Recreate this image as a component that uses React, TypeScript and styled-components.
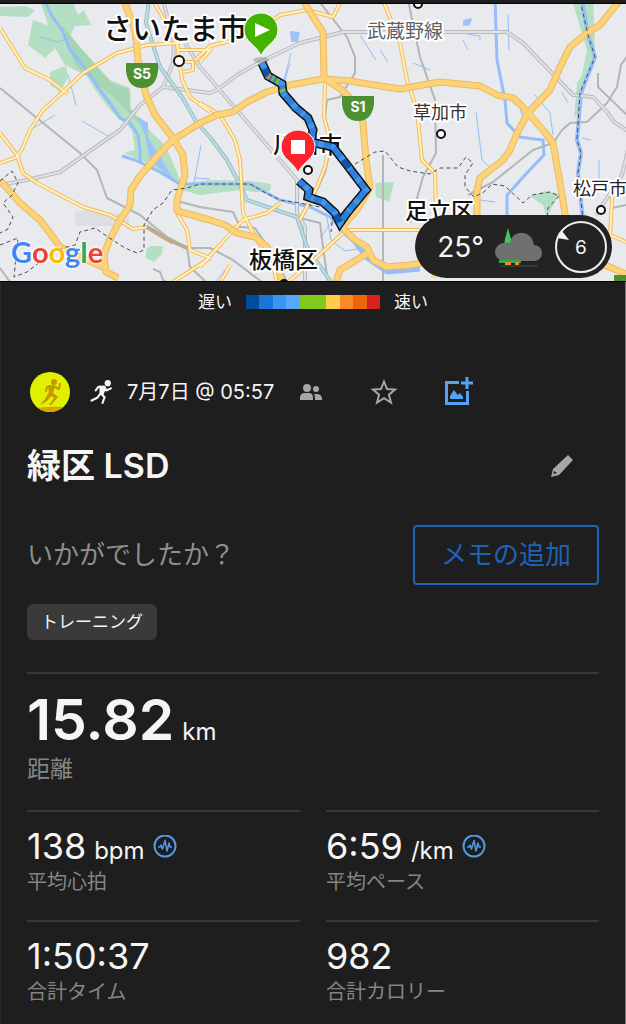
import React from "react";
import styled, { createGlobalStyle } from "styled-components";

const GlobalStyle = createGlobalStyle`
  *, *::before, *::after { box-sizing: border-box; }
  body {
    margin: 0;
    background: #1e1e1e;
    color: #f5f5f5;
    font-family: Inter, "Noto Sans CJK JP", sans-serif;
  }
  h1, h2, p, dl, dt, dd { margin: 0; }
  button { font-family: inherit; cursor: pointer; }
`;

const Page = styled.main`
  border-top: 3px solid #1e1e1e;
`;

const MapPanel = styled.section`
  position: relative;
  overflow: hidden;
  background: #e8eaed;
`;

const MapSvg = styled.svg`
  display: block;
  width: 100%;
  height: auto;
`;

const WeatherPill = styled.div`
  position: absolute;
  right: 14px;
  bottom: 4px;
  display: flex;
  align-items: center;
  gap: 10px;
  height: 63px;
  padding: 0 4px 0 22px;
  border-radius: 32px;
  background: #232323;
`;

const Temperature = styled.span`
  font-size: 28px;
  line-height: 32px;
`;

const Body = styled.div`
  border: solid #2b2b2b;
  border-width: 0 0 1px 1px;
  border-right: 1px solid #777;
`;

const Legend = styled.div`
  display: flex;
  align-items: center;
  justify-content: center;
  gap: 14px;
  height: 40px;
  font-size: 17px;
  line-height: 24px;
`;

const LegendBar = styled.div`
  display: flex;
  width: 134px;
  height: 14px;
`;

const LegendStep = styled.span<{ $color: string }>`
  flex: 1;
  background: ${(p) => p.$color};
`;

const Content = styled.div`
  padding: 46px 26px 0;
`;

const MetaRow = styled.div`
  display: flex;
  align-items: center;
  height: 48px;
`;

const Avatar = styled.svg`
  width: 40px;
  height: 40px;
  margin: 0 20px 0 3px;
`;

const When = styled.time`
  margin: 0 26px 0 14px;
  font-size: 20px;
  line-height: 24px;
  white-space: nowrap;
`;

const IconButton = styled.button<{ $before?: number; $after?: number; $color?: string }>`
  display: flex;
  margin: 0 ${(p) => p.$after ?? 0}px 0 ${(p) => p.$before ?? 0}px;
  padding: 0;
  border: 0;
  background: none;
  color: ${(p) => p.$color ?? "#a6a6a6"};
`;

const SplitRow = styled.div<{ $top: number }>`
  display: flex;
  align-items: center;
  justify-content: space-between;
  margin-top: ${(p) => p.$top}px;
`;

const Title = styled.h1`
  font-size: 34px;
  font-weight: 600;
  line-height: 48px;
`;

const Prompt = styled.p`
  color: #8f8f8f;
  font-size: 26px;
  line-height: 36px;
`;

const NoteButton = styled.button`
  height: 60px;
  padding: 0 26px;
  border: 2px solid #1f62b5;
  border-radius: 4px;
  background: none;
  color: #1f62b5;
  font-size: 26px;
  line-height: 36px;
`;

const Tag = styled.span`
  display: inline-block;
  margin-top: 19px;
  padding: 0 14px;
  border-radius: 6px;
  background: #3a3a3a;
  font-size: 17px;
  line-height: 36px;
  vertical-align: top;
`;

const Stats = styled.dl`
  display: grid;
  grid-template-columns: 1fr 1fr;
  column-gap: 26px;
  margin-top: 32px;
`;

const Stat = styled.div<{ $hero?: boolean }>`
  display: flex;
  flex-direction: column-reverse;
  justify-content: flex-end;
  grid-column: ${(p) => (p.$hero ? "1 / -1" : "auto")};
  height: ${(p) => (p.$hero ? 138 : 110)}px;
  padding-top: ${(p) => (p.$hero ? 16 : 14)}px;
  border-top: 2px solid #383838;
`;

const StatLabel = styled.dt<{ $hero?: boolean }>`
  color: #858585;
  font-size: ${(p) => (p.$hero ? 23 : 20)}px;
  line-height: ${(p) => (p.$hero ? 36 : 28)}px;
`;

const StatValue = styled.dd<{ $hero?: boolean }>`
  display: flex;
  align-items: baseline;
  gap: 8px;
  height: ${(p) => (p.$hero ? 61 : 42)}px;
  font-size: ${(p) => (p.$hero ? 57 : 36)}px;
  font-weight: ${(p) => (p.$hero ? 600 : 400)};
  line-height: ${(p) => (p.$hero ? 60 : 40)}px;
`;

const Unit = styled.span`
  font-size: 24px;
  font-weight: 400;
  line-height: 32px;
`;

const MapLabel = styled.text<{ $size: number; $color?: string; $weight?: number }>`
  font-size: ${(p) => p.$size}px;
  font-weight: ${(p) => p.$weight ?? 500};
  fill: ${(p) => p.$color ?? "#111"};
  stroke: #fff;
  stroke-width: 4px;
  stroke-linejoin: round;
  paint-order: stroke;
`;

const ShieldText = styled.text`
  font-size: 14px;
  font-weight: 700;
  fill: #fff;
  text-anchor: middle;
`;

const LogoText = styled.text`
  font-family: Lato, sans-serif;
  font-size: 29px;
  font-weight: 700;
  filter: drop-shadow(0 0 1px #fff) drop-shadow(0 0 1px #fff);
`;

const highways = [
  "M124,0 L135,30 138,60 146,95 155,115 173,138 183,155 185,175 177,200 177,211 210,220 225,225 237,233 255,237 267,247 278,267 283,285",
  "M118,278 L106,272 104,255 109,241 120,220 130,205 131,190 140,176 160,153 173,140 200,123 217,115 233,112 247,102 267,92 290,85 323,79 350,81 380,86 400,89 440,82 480,86 497,95 513,98 521,105 528,113 543,130 553,143 560,183 565,213 568,230",
  "M0,180 L20,203 40,220 53,237 60,247 80,257 106,268",
  "M303,0 L315,20 323,32 324,78 342,90 358,107 363,123 366,160 370,187 357,210 342,227 355,240 367,247 373,260 387,267 410,265 430,262",
  "M368,253 L340,270 335,285",
  "M620,0 L600,25 587,33 570,47 560,67 550,90 528,113 517,133 510,150 503,160 480,178 477,190 477,220",
  "M600,263 L626,274",
];

const roads = [
  "M0,28 L15,52 25,68 50,80 68,94",
  "M180,43 L147,45 117,53 83,73 63,92 43,110 30,130 23,147 17,157 0,163",
  "M0,133 L17,155 23,173 37,183 83,207 110,215 133,229 147,227 173,243",
  "M173,282 L210,258 M190,250 L210,258 M177,213 L187,230 190,250",
  "M153,0 L177,43 182,80 190,97 210,112",
  "M177,50 L210,50 M182,62 L193,62 193,70 183,72 M195,60 L210,46 250,36 280,15 307,10 M200,62 L212,48 M307,10 L333,17 340,3",
  "M200,103 L220,115 235,140 240,160 243,213 257,240 273,267 278,285",
  "M325,83 L324,117 330,140 325,167 317,187 300,220",
  "M343,230 L420,230",
  "M383,0 L400,43 407,80 417,110 422,160 435,173 436,210",
  "M200,267 L227,237 243,220 267,213 280,203",
  "M343,233 L317,257 287,283 M220,283 L230,265 M433,278 L440,262",
  "M613,185 L610,235 626,242",
];

const darkRails = [
  "M0,88 L80,153 97,170 107,198 140,215 167,237 187,248 190,267 207,283 M187,248 L210,248 233,260 263,283",
  "M177,201 L200,207 233,212 240,227 255,228 277,260 287,283",
  "M318,0 L347,37 355,57 355,73 340,97 327,100 325,117 332,143 325,172 317,190 300,218 320,223 323,247 328,283",
  "M383,155 L383,283",
  "M408,0 L420,57 435,100 436,153 423,177 410,223",
  "M468,195 L493,182 533,150 553,143 562,130 570,123 587,122 607,103 617,87 621,65 628,55 M598,73 L598,87 628,116",
  "M153,269 L160,272 163,280 168,283 M0,268 L10,282 M612,208 L626,205",
];

const lightRails = [
  "M0,185 L27,180 60,172 87,153 120,130 140,105 163,87 173,63 174,43 163,0",
  "M163,87 L210,93 217,90 237,75 260,62 300,43 343,32 410,32 507,32 523,43 573,95 593,97 607,112 614,122 628,131",
  "M185,43 L200,67 297,180 297,213 305,227 305,283",
  "M628,150 L622,175 596,215",
];

const tealRails = ["M149,0 L146,23 160,67 182,97 197,123 210,137 227,160 240,185 247,200 270,208 297,217 307,247 333,285"];

const rivers: [string, number][] = [
  ["M44,0 L52,16 62,30 70,50 85,68 100,90 110,103 120,118 130,123 138,135 140,150 140,163", 3],
  ["M122,156 L135,160 160,172 180,184 210,184 250,184 280,200 310,207 330,217 342,230", 3],
  ["M342,230 L355,242 367,258 387,272 420,269", 5],
  ["M495,0 L497,60 505,100 507,123 520,137 543,140 544,155 525,175 507,195 507,220", 3],
  ["M582,0 L588,35 595,57 581,93 577,140 581,153 578,173 583,220", 4],
  ["M40,37 L57,42 70,38 M68,75 L76,105 M82,121 L108,136 M30,130 L55,115 M194,183 L201,145 M194,178 L210,179 M284,80 L291,53 M284,83 L290,63", 1],
  ["M463,40 L468,50 M467,34 L480,36 480,41 M508,15 L509,50 M413,63 L430,70 M476,112 L482,160 490,167 M535,95 L550,113 553,135 M582,138 L591,140 M562,92 L568,103 M520,108 L525,125", 1],
  ["M326,213 L331,240 345,251 357,249 M360,35 L376,60 M380,50 L388,62 M215,282 L225,270 M480,200 L495,202 M333,220 L320,238 M599,160 L599,185", 1],
];

const borders = [
  "M0,181 L12,171 18,183 12,195 3,203 13,217 8,229 0,233 M0,245 L18,238 14,277 27,272 55,250 75,245 80,232 95,228 108,237 125,248 137,253 144,250 144,225 153,210 163,203 172,190 187,188 200,184 250,184 262,191 280,200 300,203 325,208 333,215 347,212",
  "M333,215 L331,232 M355,164 L375,152 385,151 398,167 410,171 430,174 440,168 458,168 466,157 473,163 465,175 465,187 474,197 484,192 492,184 505,186 523,203 532,195 550,192 559,196 548,208 547,220",
  "M580,0 L588,35 595,57 580,93 577,140 581,153 578,173 583,220",
];

const route =
  "M262,63 L268,76 282,84 283,93 296,108 308,118 313,130 311,142 333,147 347,165 366,190 347,213 340,223 335,213 323,202 308,197 309,190 299,181";

const stepColors = ["#004b9b", "#1776d8", "#3b95f3", "#57a9fb", "#82c91e", "#82c91e", "#ffcc4d", "#fa8a28", "#ec670b", "#d7211f"];

function Strokes({ paths, color, width }: { paths: string[]; color: string; width: number }) {
  return (
    <g fill="none" stroke={color} strokeWidth={width} strokeLinejoin="round">
      {paths.map((d) => (
        <path key={d} d={d} />
      ))}
    </g>
  );
}

function RouteMap() {
  return (
    <MapSvg viewBox="0 3 626 279" role="img" aria-label="ルートマップ">
      <rect y="3" width="626" height="279" fill="#e8eaed" />
      <g fill="#b4dfc3">
        <path d="M40,0 H72 L78,15 84,10 91,25 75,26 70,36 74,46 82,50 100,72 110,80 130,88 131,108 142,123 153,134 165,145 172,160 182,185 163,176 145,162 124,153 135,150 132,130 112,112 95,90 87,76 65,65 55,48 48,25Z" />
        <path d="M33,20 L50,26 55,48 45,58 28,45Z M50,72 L66,66 68,77 60,92 50,85Z M0,7 L25,6 35,10 28,17 0,16Z" />
        <path d="M182,184 L210,180 250,181 271,184 270,191 255,192 240,190 200,195 182,190Z M375,183 L394,182 389,202 376,197Z M146,250 L150,246 163,246 162,254 154,262 146,258Z" />
        <path d="M572,0 H593 L595,50 586,80 580,110 574,118 577,83 582,75 587,50Z M530,196 L545,191 559,194 553,205 547,218 543,205Z" />
      </g>
      <path d="M62,25 L80,47 112,83 130,90 129,108 152,134 138,122 115,98 92,80 75,65Z" fill="#a4d5b5" />
      <path d="M75,212 L90,210 130,216 128,225 110,226 75,226Z" fill="#dcdee1" />
      <path d="M137,116 L148,123 148,138 158,153 175,182 150,160 145,135Z M290,31 L300,32 298,42 291,42Z M463,20 L472,18 470,25 463,26Z" fill="#9dc3fb" />
      <g fill="none" stroke="#94bdfa">
        {rivers.map(([d, w]) => (
          <path key={d} d={d} strokeWidth={w} />
        ))}
      </g>
      <Strokes paths={darkRails} color="#b3b5b7" width={2} />
      <Strokes paths={lightRails} color="#b9bbbe" width={4} />
      <Strokes paths={lightRails} color="#dfe1e4" width={2} />
      <Strokes paths={tealRails} color="#94bec6" width={4} />
      <Strokes paths={tealRails} color="#bfdde2" width={2} />
      <Strokes paths={roads} color="#f3bb57" width={4} />
      <Strokes paths={roads} color="#fff1c4" width={2} />
      <Strokes paths={highways} color="#ecb95c" width={7} />
      <Strokes paths={highways} color="#fdd37a" width={5} />
      <path d="M147,227 L167,239 187,248" fill="none" stroke="#b9ab91" strokeWidth="4" />
      <g fill="none" stroke="#4a4d52" strokeWidth="1" strokeDasharray="4 3">
        {borders.map((d) => (
          <path key={d} d={d} />
        ))}
      </g>

      <g fill="#4c9031">
        <path d="M126,63 H158 V71 Q156,88 142,88 Q128,88 126,71Z M342,96 H374 V104 Q372,121 358,121 Q344,121 342,104Z M614,275 H626 V282 H614Z" />
      </g>
      <ShieldText x="142" y="79">S5</ShieldText>
      <ShieldText x="358" y="112">S1</ShieldText>

      <g fill="#fff" stroke="#111" strokeWidth="2">
        <circle cx="179" cy="61" r="5" />
        <circle cx="418" cy="4" r="4" />
        <circle cx="441" cy="134" r="4" />
        <circle cx="601" cy="210" r="4" />
        <circle cx="284" cy="284" r="4" />
        <circle cx="308" cy="170" r="4" />
      </g>
      <MapLabel x="103" y="40" $size={29}>さいたま市</MapLabel>
      <MapLabel x="367" y="38" $size={19} $color="#5c5f63" $weight={400}>武蔵野線</MapLabel>
      <MapLabel x="413" y="119" $size={18} $color="#333" $weight={400}>草加市</MapLabel>
      <MapLabel x="273" y="153" $size={23}>川口市</MapLabel>
      <MapLabel x="573" y="195" $size={18} $color="#222" $weight={400}>松戸市</MapLabel>
      <MapLabel x="405" y="219" $size={23}>足立区</MapLabel>
      <MapLabel x="249" y="268" $size={23}>板橋区</MapLabel>

      <path d={route} fill="none" stroke="#111" strokeWidth="9" strokeLinejoin="miter" />
      <path d={route} fill="none" stroke="#2d7fdc" strokeWidth="6" strokeLinejoin="miter" />
      <path d={route} fill="none" stroke="#4794eb" strokeWidth="6" strokeDasharray="5 8 3 11" />
      <g fill="none" strokeWidth="6">
        <path d="M265,69 L268,76 M343,160 L349,168 M336,215 L340,222" stroke="#0c55a8" />
        <path d="M268,76 L270,77" stroke="#e08a2c" />
        <path d="M272,78 L274,79 M276,81 L279,82 M282,89 L283,92" stroke="#79bd3c" />
      </g>
      <ellipse cx="261" cy="60" rx="8" ry="3" fill="#555" opacity=".3" />
      <g stroke="#fff" strokeWidth="1">
        <path d="M261,56 C257,45 244,42 244,30 A17,17 0 0 1 278,30 C278,42 265,45 261,56Z" fill="#43b300" />
        <path d="M298,173 C294,162 281,159 281,147 A17,17 0 0 1 315,147 C315,159 302,162 298,173Z" fill="#fb242b" />
      </g>
      <path d="M255,23 L270,30 255,37Z M291,140 H305 V154 H291Z" fill="#fff" />

      <LogoText x="11" y="263">
        <tspan fill="#4285f4">G</tspan>
        <tspan fill="#ea4335">o</tspan>
        <tspan fill="#fbbc05">o</tspan>
        <tspan fill="#4285f4">g</tspan>
        <tspan fill="#34a853">l</tspan>
        <tspan fill="#ea4335">e</tspan>
      </LogoText>
      <path d="M0,3.500 H626 M0,281.500 H626" stroke="#000" />
    </MapSvg>
  );
}

function CloudIcon() {
  return (
    <svg width="50" height="44" viewBox="0 0 50 44" aria-label="曇り" role="img">
      <path d="M14,3 L17,14 18,22 10,22 11,14Z" fill="#43c463" />
      <path d="M10,36 A9,9 0 0 1 10,18 Q13,17 16,18 C18,4 38,4 40,20 A8,8 0 0 1 40,36Z" fill="#707070" />
      <path d="M5,35 H27 V38 H5Z" fill="#33a852" />
      <path d="M11,37 H17 V40 H11Z M21,37 H25 V40 H21Z" fill="#f08b2c" />
      <path d="M6,41 H44" stroke="#4a4a4a" strokeWidth="1" />
    </svg>
  );
}

function WindDial() {
  return (
    <svg width="54" height="54" viewBox="0 0 54 54" aria-label="風速 6" role="img">
      <circle cx="27" cy="27" r="25" fill="none" stroke="#eee" strokeWidth="2" />
      <path d="M8,11 L15,20 3,18Z" fill="#f2f2f2" />
      <text x="27" y="34" textAnchor="middle" fontSize="19" fill="#f5f5f5">6</text>
    </svg>
  );
}

function Runner() {
  return (
    <g>
      <circle cx="17" cy="3" r="3" />
      <path
        d="M5.500,10 L8,6.500 L13,6.500 L10.500,13 L14,16.500 L12,22 M10,13 L7,17 L1.500,19.700 M13.500,7 L15.500,10 L20,8"
        fill="none"
        stroke="currentColor"
        strokeWidth="2"
        strokeLinecap="round"
        strokeLinejoin="round"
      />
      <path d="M9,5.500 L14.500,5.500 L15.500,8 L12.500,15 L9,14Z" />
    </g>
  );
}

function PulseIcon() {
  return (
    <svg width="24" height="24" viewBox="0 0 24 24" aria-label="グラフ" role="img">
      <circle cx="12" cy="10" r="10.500" fill="none" stroke="#5298e6" strokeWidth="2" transform="translate(0 1)" />
      <path d="M5,12 H7 L8,10 L9.500,14 L12,5.500 L14,16 L16,8 L17,12 H19" fill="none" stroke="#5298e6" strokeWidth="1.500" strokeLinejoin="round" />
    </svg>
  );
}

interface StatItem {
  label: string;
  value: string;
  unit?: string;
  chart?: boolean;
  hero?: boolean;
}

const stats: StatItem[] = [
  { label: "距離", value: "15.82", unit: "km", hero: true },
  { label: "平均心拍", value: "138", unit: "bpm", chart: true },
  { label: "平均ペース", value: "6:59", unit: "/km", chart: true },
  { label: "合計タイム", value: "1:50:37" },
  { label: "合計カロリー", value: "982" },
];

export default function App() {
  return (
    <Page>
      <GlobalStyle />
      <MapPanel>
        <RouteMap />
        <WeatherPill>
          <Temperature>25°</Temperature>
          <CloudIcon />
          <WindDial />
        </WeatherPill>
      </MapPanel>
      <Body>
        <Legend>
          <span>遅い</span>
          <LegendBar>
            {stepColors.map((c, i) => (
              <LegendStep key={i} $color={c} />
            ))}
          </LegendBar>
          <span>速い</span>
        </Legend>
        <Content>
          <MetaRow>
            <Avatar viewBox="0 0 40 40" color="#c39700" role="img" aria-label="プロフィール">
              <circle cx="20" cy="20" r="20" fill="#dff000" />
              <path d="M8,36 Q20,34 33,35 Q27,40 20,40 Q13,40 8,36Z" fill="#d9a400" />
              <circle cx="24" cy="10" r="3" fill="currentColor" />
              <path d="M16,19 L17,15 L23,14 L29,17 L30,12" fill="none" stroke="currentColor" strokeWidth="2" strokeLinecap="round" strokeLinejoin="round" />
              <path d="M18,13 L25,14 L23,21 L28,25 L21,33 L19,33 L24,26 L19,22Z M19,20 L22,23 L17,29 L10,33 L15,27Z" fill="currentColor" />
            </Avatar>
            <svg width="23" height="24" viewBox="0 0 22 23" fill="currentColor" role="img" aria-label="ランニング">
              <Runner />
            </svg>
            <When>7月7日 @ 05:57</When>
            <IconButton type="button" aria-label="共有範囲">
              <svg width="22" height="18" viewBox="0 0 22 18" fill="currentColor">
                <circle cx="7" cy="5" r="4" />
                <path d="M0,17 V15 Q0,10 5,10 H9 Q13,10 13,15 V17Z M15,17 V15 Q15,12 14,11 H17 Q21,11 22,15 V17Z" />
                <circle cx="16" cy="6" r="3" />
              </svg>
            </IconButton>
            <IconButton type="button" aria-label="お気に入り" $before={48}>
              <svg width="28" height="28" viewBox="0 0 28 28" fill="none" stroke="currentColor" strokeWidth="2">
                <path d="M14,3.500 L17,11 L25,11.500 L18.900,16.700 L21,24.500 L14,20.200 L7,24.500 L9.100,16.700 L3,11.500 L11,11Z" />
              </svg>
            </IconButton>
            <IconButton type="button" aria-label="写真を追加" $before={46} $color="#55a3f5">
              <svg width="30" height="30" viewBox="0 0 30 30" fill="none" stroke="currentColor" strokeWidth="3">
                <path d="M15,5.500 H2.500 V26.500 H23.500 V14 M23,0 V12 M17,6 H29" />
                <path d="M6,22 V19 L10,13 L13,17 L14,18 L16,16 L19,20 V22Z" fill="currentColor" stroke="none" />
              </svg>
            </IconButton>
          </MetaRow>
          <SplitRow $top={26}>
            <Title>緑区 LSD</Title>
            <IconButton type="button" aria-label="タイトルを編集" $after={25}>
              <svg width="24" height="24" viewBox="0 0 24 24" fill="currentColor">
                <path fillRule="evenodd" d="M1,23 L3,15 L18,1 L23,6 L9,21Z M4,17 L3.500,20 L7,19Z" />
              </svg>
            </IconButton>
          </SplitRow>
          <SplitRow $top={35}>
            <Prompt>いかがでしたか？</Prompt>
            <NoteButton type="button">メモの追加</NoteButton>
          </SplitRow>
          <Tag>トレーニング</Tag>
          <Stats>
            {stats.map((s) => (
              <Stat key={s.label} $hero={s.hero}>
                <StatLabel $hero={s.hero}>{s.label}</StatLabel>
                <StatValue $hero={s.hero}>
                  {s.value}
                  {s.unit && <Unit>{s.unit}</Unit>}
                  {s.chart && <PulseIcon />}
                </StatValue>
              </Stat>
            ))}
          </Stats>
        </Content>
      </Body>
    </Page>
  );
}
